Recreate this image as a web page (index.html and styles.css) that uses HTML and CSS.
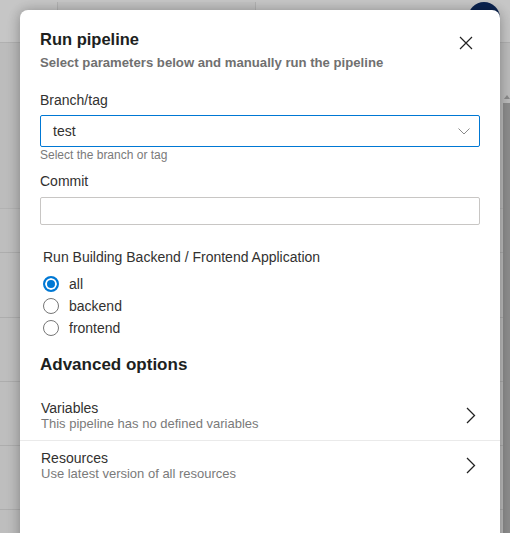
FILE: index.html
```html
<!DOCTYPE html>
<html lang="en">
<head>
<meta charset="utf-8">
<title>Run pipeline</title>
<link rel="stylesheet" href="styles.css">
</head>
<body>
<div class="page">
  <header class="topbar">
    <div class="search"></div>
    <div class="avatar"></div>
  </header>
  <div class="subbar"><span class="dots">⋮</span></div>
  <div class="rows">
    <div class="row-line"></div>
    <div class="row-line"></div>
    <div class="row-line"></div>
    <div class="row-line"></div>
    <div class="row-line"></div>
    <div class="row-line"></div>
  </div>
  <div class="scrollbar"><span class="scroll-up"></span><span class="scroll-thumb"></span></div>
</div>

<div class="panel" role="dialog" aria-label="Run pipeline">
  <div class="panel-body">
    <div class="panel-head">
      <div>
        <h1 class="title">Run pipeline</h1>
        <p class="subtitle">Select parameters below and manually run the pipeline</p>
      </div>
      <button class="close" aria-label="Close">
        <svg width="14" height="14" viewBox="0 0 14 14"><path d="M1 1L13 13M13 1L1 13" stroke="#222" stroke-width="1.2" fill="none"/></svg>
      </button>
    </div>

    <div class="field-label branch-label">Branch/tag</div>
    <div class="select">
      <span>test</span>
      <svg width="12" height="7" viewBox="0 0 12 7"><path d="M0.5 0.5L6 6L11.5 0.5" stroke="#8a8a8a" stroke-width="1" fill="none"/></svg>
    </div>
    <div class="helper">Select the branch or tag</div>

    <div class="field-label commit-label">Commit</div>
    <div class="input"></div>

    <div class="radio-group">
      <div class="radio-title">Run Building Backend / Frontend Application</div>
      <div class="radio-row"><span class="radio checked"></span><span>all</span></div>
      <div class="radio-row"><span class="radio"></span><span>backend</span></div>
      <div class="radio-row"><span class="radio"></span><span>frontend</span></div>
    </div>

    <h2 class="section-title">Advanced options</h2>
  </div>

  <div class="option-list">
    <div class="option">
      <div class="option-text">
        <div class="option-name">Variables</div>
        <div class="option-desc">This pipeline has no defined variables</div>
      </div>
      <svg class="chev" width="10" height="17" viewBox="0 0 10 17"><path d="M1 1L8.5 8.5L1 16" stroke="#222" stroke-width="1.3" fill="none"/></svg>
    </div>
    <div class="option">
      <div class="option-text">
        <div class="option-name">Resources</div>
        <div class="option-desc">Use latest version of all resources</div>
      </div>
      <svg class="chev" width="10" height="17" viewBox="0 0 10 17"><path d="M1 1L8.5 8.5L1 16" stroke="#222" stroke-width="1.3" fill="none"/></svg>
    </div>
  </div>
</div>
</body>
</html>
```

FILE: styles.css
```css
* { box-sizing: border-box; }

html, body {
  margin: 0;
  padding: 0;
  height: 100%;
  overflow: hidden;
}

body {
  font-family: "Liberation Sans", Arial, sans-serif;
  background: #bcbcbc;
  color: #323130;
}

.page {
  position: relative;
  height: 533px;
  background: #bdbdbd;
}

.topbar {
  height: 43px;
  background: #c6c6c6;
  border-bottom: 1px solid #b0b0b0;
  display: flex;
  align-items: flex-start;
  justify-content: space-between;
  padding: 2px 10px 0 57px;
}

.search {
  width: 199px;
  height: 12px;
  border: 1px solid #b2b2b2;
  border-top: none;
  border-radius: 0 0 3px 3px;
  background: #c2c2c2;
}

.avatar {
  width: 32px;
  height: 32px;
  border-radius: 50%;
  background: #0b2350;
}

.subbar {
  height: 166px;
  background: #bcbcbc;
  border-bottom: 1px solid #b2b2b2;
  display: flex;
  justify-content: flex-end;
  padding: 10px 7px 0 0;
}

.dots {
  color: #555;
  font-size: 14px;
  line-height: 20px;
}

.rows {
  display: flex;
  flex-direction: column;
}

.row-line {
  height: 44px;
  border-bottom: 1px solid #adadad;
  background: #bebebe;
}
.row-line:nth-child(2) { height: 65px; }
.row-line:nth-child(3) { height: 64px; }
.row-line:nth-child(4) { height: 64px; }
.row-line:nth-child(5) { height: 64px; }

.scrollbar {
  position: absolute;
  right: 0;
  top: 94px;
  width: 7px;
  bottom: 0;
  display: flex;
  flex-direction: column;
  align-items: center;
}

.scroll-up {
  width: 0;
  height: 0;
  border-left: 3px solid transparent;
  border-right: 3px solid transparent;
  border-bottom: 4px solid #8a8a8a;
  margin: 1px 0 4px;
}

.scroll-thumb {
  flex: 1;
  width: 7px;
  background: #8d8d8d;
}

.panel {
  position: absolute;
  left: 20px;
  top: 10px;
  width: 480px;
  height: 540px;
  background: #fff;
  border-radius: 8px 8px 0 0;
  box-shadow: 0 0 12px rgba(0, 0, 0, 0.22), 0 4px 16px rgba(0, 0, 0, 0.12);
}

.panel-body {
  padding: 19px 20px 0 20px;
}

.panel-head {
  display: flex;
  justify-content: space-between;
  align-items: flex-start;
}

.title {
  margin: 0;
  font-size: 16.5px;
  line-height: 20px;
  font-weight: 700;
  color: #201f1e;
}

.subtitle {
  margin: 5px 0 0;
  font-size: 13.15px;
  line-height: 17px;
  font-weight: 700;
  color: #707070;
}

.close {
  border: none;
  background: none;
  padding: 0;
  margin: 7px 7px 0 0;
  width: 14px;
  height: 14px;
  display: flex;
}

.field-label {
  font-size: 14px;
  line-height: 20px;
  color: #323130;
}

.branch-label { margin-top: 19px; }

.select {
  margin-top: 5px;
  height: 32px;
  border: 1px solid #0078d4;
  border-radius: 2px;
  display: flex;
  align-items: center;
  justify-content: space-between;
  padding: 0 9px 0 12px;
  font-size: 14px;
  color: #323130;
}

.helper {
  margin-top: 1px;
  font-size: 12px;
  line-height: 14px;
  color: #7a7a7a;
}

.commit-label { margin-top: 9px; }

.input {
  margin-top: 6px;
  height: 28px;
  border: 1px solid #c8c6c4;
  border-radius: 2px;
}

.radio-group {
  margin-top: 22px;
  padding-left: 3px;
}

.radio-title {
  font-size: 14px;
  line-height: 20px;
  color: #323130;
  margin-bottom: 6px;
}

.radio-row {
  display: flex;
  align-items: center;
  gap: 10px;
  height: 22px;
  font-size: 14px;
  line-height: 22px;
  color: #323130;
}

.radio {
  width: 16px;
  height: 16px;
  border-radius: 50%;
  border: 1px solid #767676;
  background: #fff;
  flex: none;
}

.radio.checked {
  border: 2px solid #0078d4;
  background: #0078d4;
  box-shadow: inset 0 0 0 2px #fff;
}

.section-title {
  margin: 15px 0 0;
  font-size: 17px;
  line-height: 22px;
  font-weight: 700;
  color: #201f1e;
}

.option-list {
  margin-top: 15px;
}

.option {
  display: flex;
  align-items: center;
  justify-content: space-between;
  padding: 9px 24px 9px 21px;
  height: 49px;
}

.option + .option {
  border-top: 1px solid #eaeaea;
  height: 50px;
}

.option-name {
  font-size: 14px;
  line-height: 16px;
  color: #323130;
}

.option-desc {
  font-size: 13px;
  line-height: 15px;
  color: #7a7a7a;
}

.chev { flex: none; }
```
